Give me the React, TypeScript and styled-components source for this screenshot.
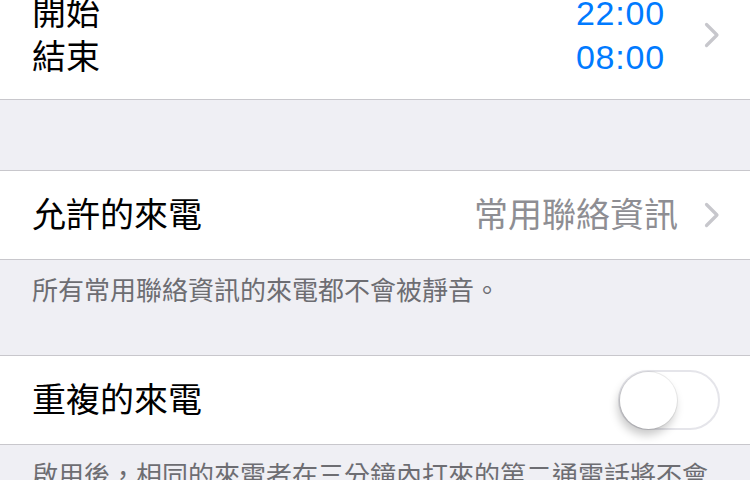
import React from "react";
import styled, { createGlobalStyle } from "styled-components";

const GlobalStyle = createGlobalStyle`
  html, body {
    margin: 0;
    padding: 0;
    background: #efeff4;
  }
  body {
    font-family: "Liberation Sans", "Noto Sans CJK TC", sans-serif;
    -webkit-font-smoothing: antialiased;
    overflow: hidden;
  }
`;

const Page = styled.div`
  width: 750px;
  height: 480px;
  overflow: hidden;
  background: #efeff4;
`;

// the list is scrolled, the first group starts above the window
const Scroller = styled.div`
  margin-top: -30px;
`;

const Group = styled.section`
  background: #ffffff;
  border-top: 1px solid #c8c7cc;
  border-bottom: 1px solid #c8c7cc;
`;

const Cell = styled.div<{ $tall?: boolean }>`
  display: flex;
  align-items: center;
  height: 88px;
  padding: ${(p) => (p.$tall ? "20px 30px 20px 32px" : "0 30px 0 32px")};
`;

const Labels = styled.div`
  flex: 1;
  display: flex;
  flex-direction: column;
`;

const Label = styled.div`
  font-size: 34px;
  line-height: 44px;
  color: #000000;
`;

const Times = styled.div`
  display: flex;
  flex-direction: column;
  align-items: flex-end;
  margin-right: 39px;
`;

const Time = styled.div`
  font-size: 34px;
  line-height: 44px;
  letter-spacing: 0.8px;
  color: #007aff;
`;

const Value = styled.div`
  font-size: 34px;
  line-height: 44px;
  color: #8e8e93;
  margin-right: 26px;
`;

const Gap = styled.div<{ $h: number }>`
  height: ${(p) => p.$h}px;
`;

const Footer = styled.div`
  padding: 13px 32px 46px;
  font-size: 26px;
  line-height: 36px;
  color: #6d6d72;
`;

const Track = styled.div`
  display: flex;
  align-items: center;
  box-sizing: border-box;
  width: 102px;
  height: 60px;
  border: 2px solid #e5e5ea;
  border-radius: 30px;
  background: #ffffff;
`;

const Knob = styled.div`
  width: 57px;
  height: 57px;
  border-radius: 50%;
  background: #ffffff;
  box-shadow: -2px 6px 10px rgba(0, 0, 0, 0.22), 0 0 0 1px rgba(0, 0, 0, 0.07);
`;

const Chevron = () => (
  <svg width="16" height="26" viewBox="0 0 16 26">
    <polyline
      points="2.5,2.5 13,13 2.5,23.5"
      fill="none"
      stroke="#c7c7cc"
      strokeWidth="3.2"
      strokeLinecap="round"
      strokeLinejoin="round"
    />
  </svg>
);

const Switch = () => (
  <Track>
    <Knob />
  </Track>
);

export default function App() {
  return (
    <Page>
      <GlobalStyle />
      <Scroller>
        <Group>
          <Cell $tall>
            <Labels>
              <Label>開始</Label>
              <Label>結束</Label>
            </Labels>
            <Times>
              <Time>22:00</Time>
              <Time>08:00</Time>
            </Times>
            <Chevron />
          </Cell>
        </Group>

        <Gap $h={70} />

        <Group>
          <Cell>
            <Labels>
              <Label>允許的來電</Label>
            </Labels>
            <Value>常用聯絡資訊</Value>
            <Chevron />
          </Cell>
        </Group>
        <Footer>所有常用聯絡資訊的來電都不會被靜音。</Footer>

        <Group>
          <Cell>
            <Labels>
              <Label>重複的來電</Label>
            </Labels>
            <Switch />
          </Cell>
        </Group>
        <Footer>啟用後，相同的來電者在三分鐘內打來的第二通電話將不會被靜音。</Footer>
      </Scroller>
    </Page>
  );
}
